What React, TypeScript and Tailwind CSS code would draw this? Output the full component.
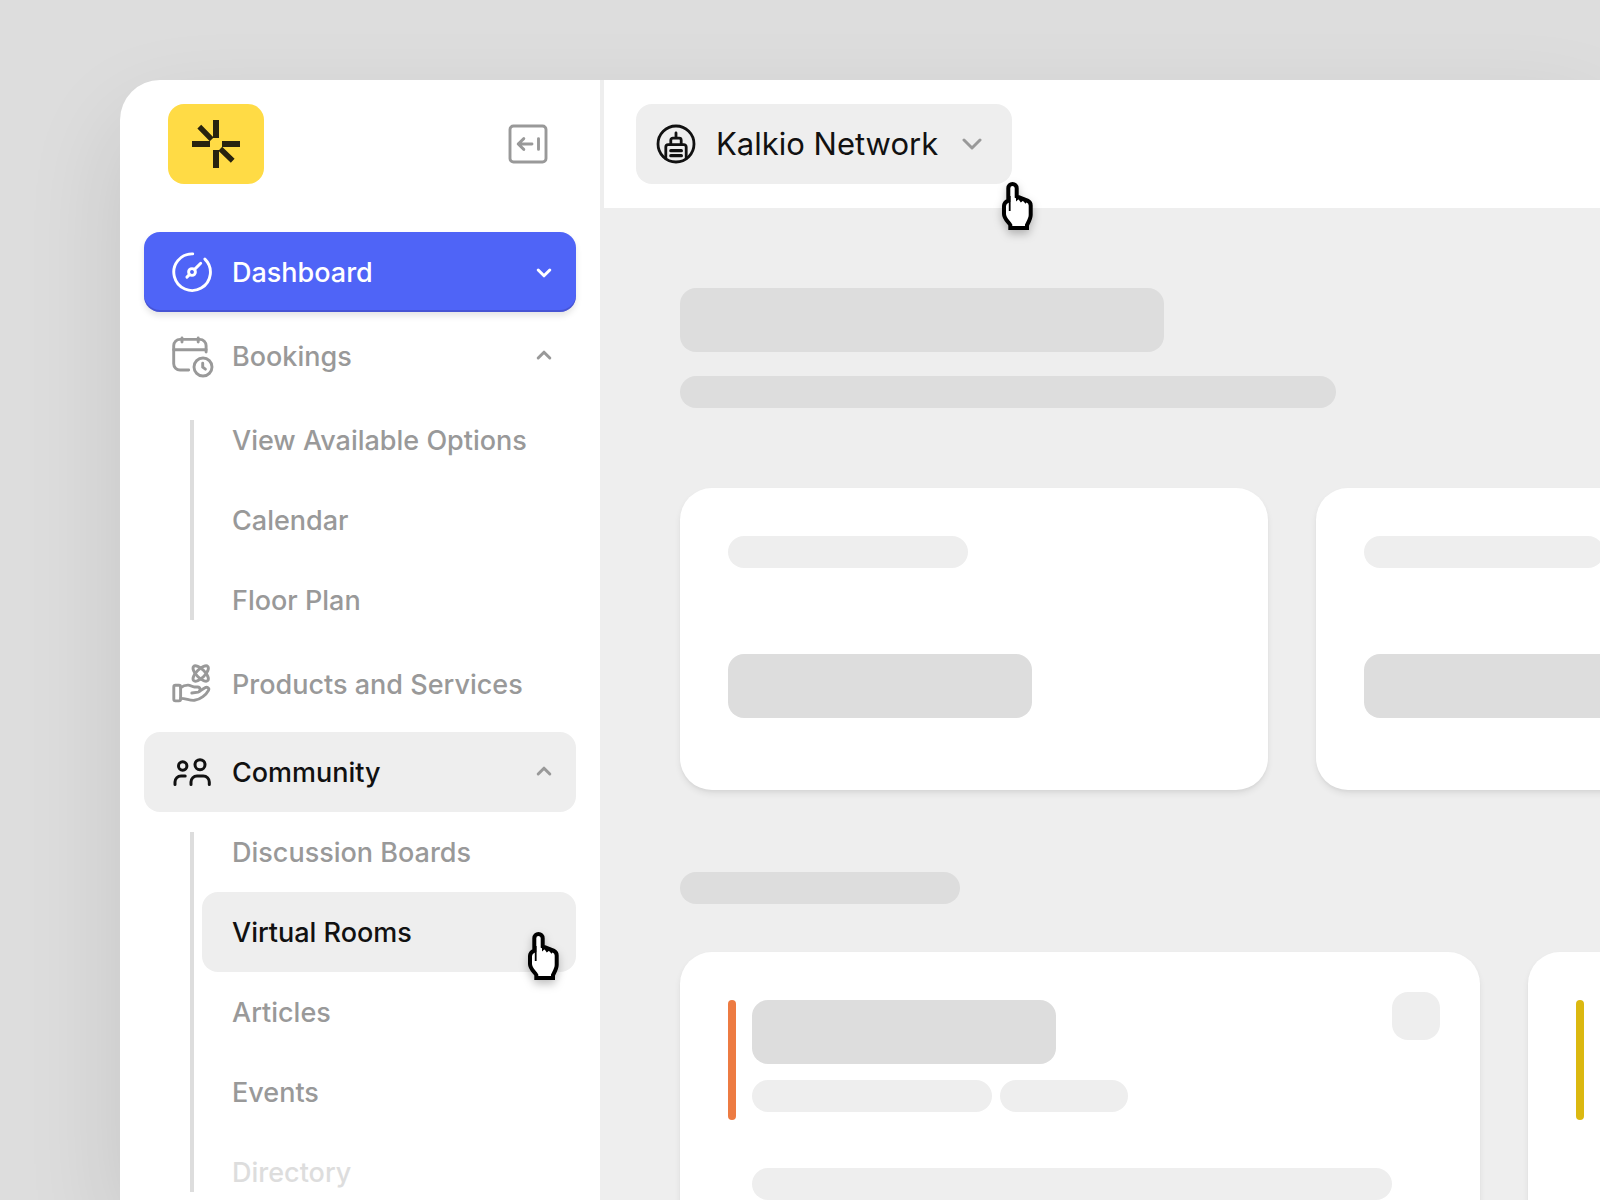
import type { ReactNode } from "react";

function Icon({ children, stroke = 3 }: { children: ReactNode; stroke?: number }) {
  return (
    <svg
      viewBox="0 0 40 40"
      className="size-10 shrink-0 overflow-visible"
      fill="none"
      stroke="currentColor"
      strokeWidth={stroke}
      strokeLinecap="round"
      strokeLinejoin="round"
      aria-hidden="true"
    >
      {children}
    </svg>
  );
}

function DashboardIcon() {
  return (
    <Icon stroke={2.9}>
      <path d="M32.9 7.1A18.3 18.3 0 1 1 20.7 1.9" />
      <circle cx="20" cy="20" r="3.4" />
      <path d="M22.6 17.4L28.7 11.3M17.4 22.6L14.9 25.1" />
    </Icon>
  );
}

function BookingsIcon() {
  return (
    <Icon stroke={2.9}>
      <path d="M16.7 34H8a6.3 6.3 0 0 1-6.3-6.3V9.7A6.3 6.3 0 0 1 8 3.4h19.8a6.3 6.3 0 0 1 6.3 6.3v6.4" />
      <path d="M1.7 13.7h32.4M10 1.9v4.2M26.2 1.9v4.2" />
      <circle cx="31" cy="31" r="9" />
      <path d="M30.7 27.2v4l2.7 2" />
    </Icon>
  );
}

function ProductsIcon() {
  return (
    <Icon stroke={2.9}>
      <rect x="1.8" y="21.3" width="6.8" height="15.6" rx="1.6" />
      <path d="M8.8 23.6C11 21.8 13.500 21 16.200 21.100c2.400.1 3.800 1.900 6.200 1.900h3.200a2.600 2.600 0 0 1 .6 5.100l-6.400.9" />
      <path d="M27.8 27l5.200-3.200c2-1.200 4.700.2 3.500 2.500C34.300 30.500 28.500 35.500 22.500 36.300c-4.500.6-8.500-1.900-13.700-1.900" />
      <ellipse cx="28.7" cy="9.500" rx="10" ry="4.200" transform="rotate(45 28.7 9.5)" />
      <ellipse cx="28.7" cy="9.500" rx="10" ry="4.200" transform="rotate(-45 28.7 9.5)" />
    </Icon>
  );
}

function CommunityIcon() {
  return (
    <Icon stroke={3}>
      <circle cx="10.7" cy="14" r="4.2" />
      <circle cx="28" cy="12.7" r="5" />
      <path d="M3 32.600V30a6 6 0 0 1 6-6h4.200" />
      <path d="M19 32.600V30a6 6 0 0 1 6-6h6.300a6 6 0 0 1 6 6v2.600" />
    </Icon>
  );
}

function CollapseIcon() {
  return (
    <Icon stroke={2.9}>
      <rect x="2" y="2" width="36" height="36" rx="3.5" />
      <path d="M24 20H10.200M15.800 14.600L10.200 20l5.600 5.400M30.500 14.600v10.800" />
    </Icon>
  );
}

function BuildingIcon() {
  return (
    <Icon stroke={2.8}>
      <circle cx="20" cy="20" r="18" />
      <path d="M20 9v4.600" />
      <path d="M14.800 20.600v-4.400a2 2 0 0 1 2-2h6.400a2 2 0 0 1 2 2v4.400" />
      <path d="M9.800 34.500V23a2.400 2.400 0 0 1 2.400-2.400h15.600a2.400 2.400 0 0 1 2.400 2.400v11.500" />
      <path d="M14.800 26.700h10.600M14.800 31.700h10.600" strokeWidth="3.200" />
    </Icon>
  );
}

function Logo() {
  return (
    <svg viewBox="0 0 48 48" className="size-12" fill="#28230f" aria-hidden="true">
      <path d="M21 0h6v18h-6zM0 21h18v6H0zM30 21h18v6H30zM21 30h6v18h-6z" />
      <path d="M7.300 6.700L19.700 19.300M28.300 28.700L40.700 40.700" stroke="#28230f" strokeWidth="5.400" />
    </svg>
  );
}

function Chevron({ up = false }: { up?: boolean }) {
  return (
    <svg
      viewBox="0 0 16 16"
      className="size-4 shrink-0"
      fill="none"
      stroke="currentColor"
      strokeWidth="3"
      strokeLinecap="round"
      strokeLinejoin="round"
      aria-hidden="true"
    >
      <path d={up ? "M2.200 10L8 4.200L13.800 10" : "M2.200 6L8 11.800L13.800 6"} />
    </svg>
  );
}

function Pointer() {
  return (
    <svg
      viewBox="0 0 31 48"
      className="h-12 w-[31px] overflow-visible drop-shadow-[0_4px_4px_rgba(0,0,0,0.25)]"
      aria-hidden="true"
    >
      <path
        d="M6.300 18.600V6.200a4.200 4.200 0 0 1 8.400 0v8.200l10.800 4.200c2.200 1 3.200 2.500 3.200 5V33c0 3.500-2.200 7-3.700 10v3H8.300v-3C6 39.500 2 36.500 2 32v-8c0-2.500 1.700-4.300 4.300-5.400z"
        fill="#fff"
        stroke="#000"
        strokeWidth="4"
      />
      <path d="M7.700 14v15" stroke="#000" strokeWidth="1.800" />
      <path d="M14 16v3.500l2.500-2.300 2.300 3.300 2.200-1.700 2.500 3 2-2.500-8-4z" fill="#000" />
    </svg>
  );
}

function NavRow({
  icon,
  label,
  tone,
  chevron,
}: {
  icon: ReactNode;
  label: string;
  tone: "primary" | "muted" | "active";
  chevron?: "up" | "down";
}) {
  const tones = {
    primary: "bg-[#4f64f7] text-white shadow-[0_4px_6px_rgba(0,0,0,0.1),inset_0_-2px_0_rgba(60,60,160,0.4)]",
    muted: "text-[#999]",
    active: "bg-[#eee] text-[#111]",
  };
  return (
    <button
      type="button"
      className={`flex h-20 w-full items-center rounded-2xl pr-6 pl-7 text-left text-[27px] font-medium ${tones[tone]}`}
    >
      {icon}
      <span className="ml-5 flex-1 pt-0.5 whitespace-nowrap">{label}</span>
      {chevron && (
        <span className={tone === "primary" ? "text-white" : "text-[#999]"}>
          <Chevron up={chevron === "up"} />
        </span>
      )}
    </button>
  );
}

function SubMenu({ items, current, faded }: { items: string[]; current?: string; faded?: string }) {
  return (
    <div className="flex pl-[46px]">
      <div className="my-5 mr-2 w-1 shrink-0 bg-[#ddd]" />
      <ul className="flex-1">
        {items.map((item) => (
          <li key={item} className="relative">
            <a
              href="#"
              className={`flex h-20 items-center rounded-2xl pt-0.5 pl-[30px] text-[27px] font-medium whitespace-nowrap ${
                item === current ? "bg-[#eee] text-[#111]" : item === faded ? "text-[#ddd]" : "text-[#999]"
              }`}
            >
              {item}
            </a>
            {item === current && (
              <div className="pointer-events-none absolute top-10 right-[17px] z-10">
                <Pointer />
              </div>
            )}
          </li>
        ))}
      </ul>
    </div>
  );
}

function StatCard() {
  return (
    <div className="w-[588px] shrink-0 rounded-[32px] bg-white px-12 pt-12 pb-[72px] shadow-[0_4px_6px_rgba(0,0,0,0.07),0_2px_2px_rgba(0,0,0,0.03)]">
      <div className="h-8 w-60 rounded-2xl bg-[#eee]" />
      <div className="mt-[86px] h-16 w-76 rounded-2xl bg-[#ddd]" />
    </div>
  );
}

function ListCard({ accent }: { accent: string }) {
  return (
    <div className="h-[400px] w-[800px] shrink-0 rounded-[32px] bg-white p-12 pr-10 shadow-[0_4px_6px_rgba(0,0,0,0.07),0_2px_2px_rgba(0,0,0,0.03)]">
      <div className="flex gap-4">
        <div className={`h-30 w-2 rounded-full ${accent}`} />
        <div className="flex-1">
          <div className="h-16 w-76 rounded-2xl bg-[#ddd]" />
          <div className="mt-4 flex gap-2">
            <div className="h-8 w-60 rounded-2xl bg-[#eee]" />
            <div className="h-8 w-32 rounded-2xl bg-[#eee]" />
          </div>
        </div>
        <div className="-mt-2 size-12 rounded-2xl bg-[#eee]" />
      </div>
      <div className="mt-12 ml-6 h-8 w-160 rounded-2xl bg-[#eee]" />
    </div>
  );
}

export default function App() {
  return (
    <div className="h-screen overflow-hidden bg-[#ddd] pt-20 pl-30 font-['Inter','Liberation_Sans',sans-serif]">
      <div className="flex h-full overflow-hidden rounded-tl-[40px] bg-white shadow-[0_40px_100px_rgba(0,0,0,0.11)]">
        <aside className="w-[484px] shrink-0 border-r-4 border-[#eee] px-6 pt-6">
          <div className="flex items-center justify-between pr-7 pl-6">
            <a
              href="#"
              aria-label="Home"
              className="flex h-20 w-24 items-center justify-center rounded-2xl bg-[#ffdb45]"
            >
              <Logo />
            </a>
            <button type="button" aria-label="Collapse sidebar" className="text-[#999]">
              <CollapseIcon />
            </button>
          </div>
          <nav className="mt-12">
            <NavRow icon={<DashboardIcon />} label="Dashboard" tone="primary" chevron="down" />
            <div className="my-1">
              <NavRow icon={<BookingsIcon />} label="Bookings" tone="muted" chevron="up" />
            </div>
            <SubMenu items={["View Available Options", "Calendar", "Floor Plan"]} />
            <div className="mt-1 mb-2">
              <NavRow icon={<ProductsIcon />} label="Products and Services" tone="muted" />
            </div>
            <NavRow icon={<CommunityIcon />} label="Community" tone="active" chevron="up" />
            <SubMenu
              items={["Discussion Boards", "Virtual Rooms", "Articles", "Events", "Directory"]}
              current="Virtual Rooms"
              faded="Directory"
            />
          </nav>
        </aside>

        <div className="flex min-w-0 flex-1 flex-col">
          <header className="flex h-32 shrink-0 items-center bg-white px-8">
            <div className="relative">
              <button
                type="button"
                className="flex h-20 w-94 items-center rounded-2xl bg-[#eee] px-5 text-[31px] text-[#111]"
              >
                <BuildingIcon />
                <span className="ml-5 flex-1 text-left leading-10 whitespace-nowrap">Kalkio Network</span>
                <svg
                  viewBox="0 0 20 12"
                  className="mr-2.5 h-3 w-5 shrink-0"
                  fill="none"
                  stroke="#999"
                  strokeWidth="3"
                  strokeLinecap="round"
                  strokeLinejoin="round"
                  aria-hidden="true"
                >
                  <path d="M2 2L10 10L18 2" />
                </svg>
              </button>
              <div className="pointer-events-none absolute top-[78px] -right-[21px] z-10">
                <Pointer />
              </div>
            </div>
          </header>

          <main className="min-h-0 flex-1 overflow-hidden bg-[#eee] pt-20 pl-[76px]">
            <div className="h-16 w-[484px] rounded-2xl bg-[#ddd]" />
            <div className="mt-6 h-8 w-164 rounded-2xl bg-[#ddd]" />
            <div className="mt-20 flex gap-12">
              <StatCard />
              <StatCard />
            </div>
            <div className="mt-[82px] h-8 w-70 rounded-2xl bg-[#ddd]" />
            <div className="mt-12 flex gap-12">
              <ListCard accent="bg-[#ed7b42]" />
              <ListCard accent="bg-[#dbb810]" />
            </div>
          </main>
        </div>
      </div>
    </div>
  );
}
